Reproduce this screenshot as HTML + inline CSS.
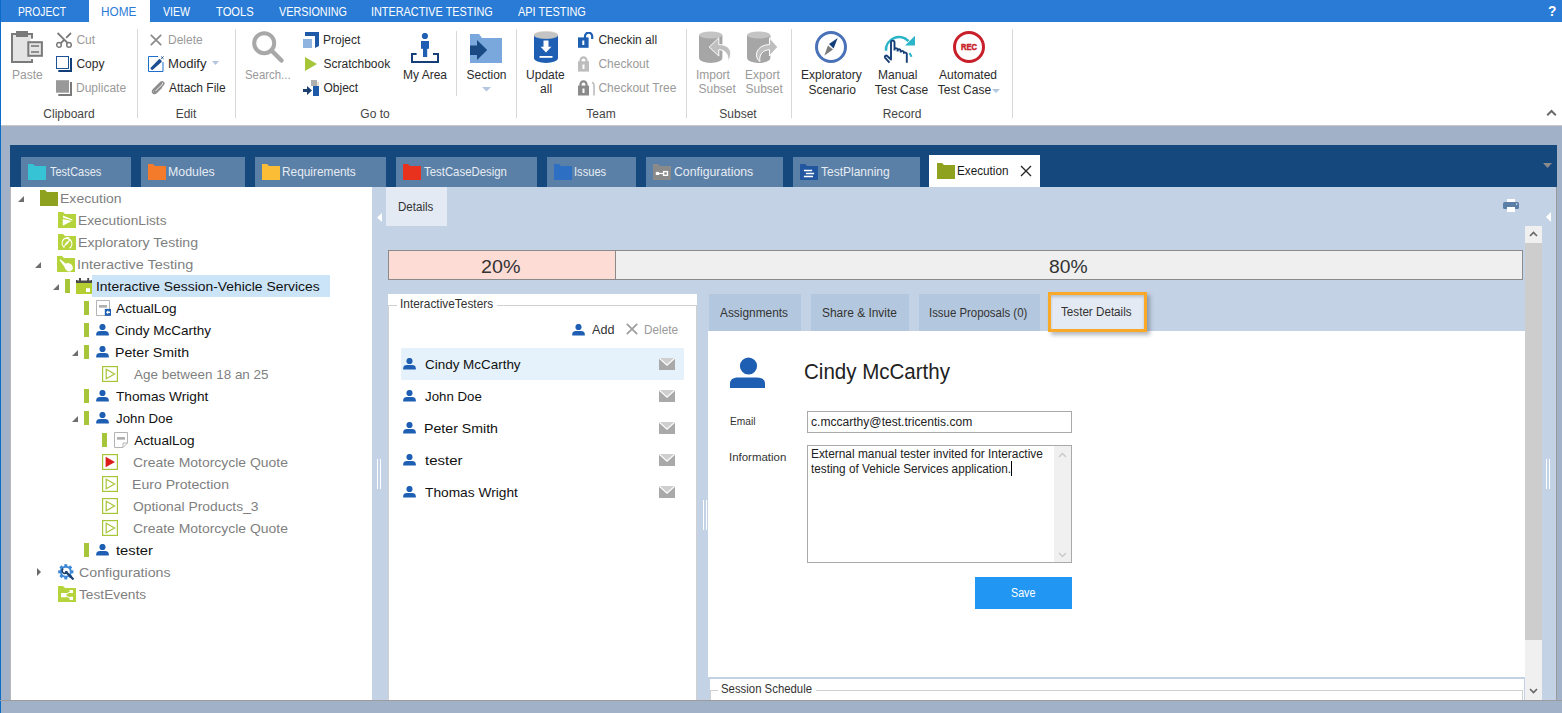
<!DOCTYPE html>
<html><head><meta charset="utf-8"><style>
html,body{margin:0;padding:0;width:1562px;height:713px;overflow:hidden;background:#a1b1c8}
body{position:relative;font-family:"Liberation Sans", sans-serif}
body>div{position:absolute}
</style></head><body>
<div style="left:0px;top:0px;width:1562px;height:713px;background:#a1b1c8;"></div>
<div style="left:0px;top:0px;width:1562px;height:22px;background:#2a7bd6;"></div>
<div style="left:1px;top:22px;width:1561px;height:103px;background:#ffffff;"></div>
<div style="left:1px;top:125px;width:1561px;height:1px;background:#c8c8c8;"></div>
<div style="left:0px;top:0px;width:1px;height:713px;background:#0a6cc8;"></div>
<div style="left:89px;top:0px;width:61px;height:22px;background:#ffffff;"></div>
<div style="left:18.48px;top:6px;font-size:12px;line-height:12px;color:#fff;white-space:nowrap;transform:scaleX(0.8580);transform-origin:0 0;">PROJECT</div>
<div style="left:101.26px;top:6px;font-size:12px;line-height:12px;color:#2a7bd6;white-space:nowrap;transform:scaleX(0.9838);transform-origin:0 0;">HOME</div>
<div style="left:162.95px;top:6px;font-size:12px;line-height:12px;color:#fff;white-space:nowrap;transform:scaleX(0.8841);transform-origin:0 0;">VIEW</div>
<div style="left:216.18px;top:6px;font-size:12px;line-height:12px;color:#fff;white-space:nowrap;transform:scaleX(0.9329);transform-origin:0 0;">TOOLS</div>
<div style="left:278.95px;top:6px;font-size:12px;line-height:12px;color:#fff;white-space:nowrap;transform:scaleX(0.9005);transform-origin:0 0;">VERSIONING</div>
<div style="left:371.02px;top:6px;font-size:12px;line-height:12px;color:#fff;white-space:nowrap;transform:scaleX(0.9054);transform-origin:0 0;">INTERACTIVE TESTING</div>
<div style="left:518.00px;top:6px;font-size:12px;line-height:12px;color:#fff;white-space:nowrap;transform:scaleX(0.9108);transform-origin:0 0;">API TESTING</div>
<div style="left:1547.88px;top:4px;font-size:14.5px;line-height:14.5px;color:#fff;white-space:nowrap;font-weight:bold;transform:scaleX(0.9466);transform-origin:0 0;">?</div>
<div style="left:137px;top:29px;width:1px;height:89px;background:#d8d8d8;"></div>
<div style="left:235px;top:29px;width:1px;height:89px;background:#d8d8d8;"></div>
<div style="left:456px;top:31px;width:1px;height:65px;background:#d8d8d8;"></div>
<div style="left:516px;top:29px;width:1px;height:89px;background:#d8d8d8;"></div>
<div style="left:686px;top:29px;width:1px;height:89px;background:#d8d8d8;"></div>
<div style="left:791px;top:29px;width:1px;height:89px;background:#d8d8d8;"></div>
<div style="left:1012px;top:29px;width:1px;height:89px;background:#d8d8d8;"></div>
<div style="left:9px;top:108px;width:120px;text-align:center;font-size:12px;line-height:12px;color:#444;white-space:nowrap">Clipboard</div>
<div style="left:126px;top:108px;width:120px;text-align:center;font-size:12px;line-height:12px;color:#444;white-space:nowrap">Edit</div>
<div style="left:315px;top:108px;width:120px;text-align:center;font-size:12px;line-height:12px;color:#444;white-space:nowrap">Go to</div>
<div style="left:541px;top:108px;width:120px;text-align:center;font-size:12px;line-height:12px;color:#444;white-space:nowrap">Team</div>
<div style="left:678px;top:108px;width:120px;text-align:center;font-size:12px;line-height:12px;color:#444;white-space:nowrap">Subset</div>
<div style="left:842px;top:108px;width:120px;text-align:center;font-size:12px;line-height:12px;color:#444;white-space:nowrap">Record</div>
<svg style="position:absolute;left:11px;top:31px" width="32" height="32" viewBox="0 0 32 32"><rect x="1" y="3" width="20" height="28" fill="#e4e4e4" stroke="#7a7a7a" stroke-width="2"/><rect x="5" y="0" width="12" height="6" fill="#7a7a7a"/><rect x="19.5" y="7.6" width="4" height="20.5" fill="#fff"/><rect x="17.3" y="11.2" width="13.6" height="13.6" fill="#e4e4e4" stroke="#7a7a7a" stroke-width="2"/><rect x="20" y="14.2" width="8" height="1.6" fill="#7a7a7a"/><rect x="20" y="20.2" width="8" height="1.6" fill="#7a7a7a"/></svg>
<div style="left:12.04px;top:69px;font-size:12px;line-height:12px;color:#9a9a9a;white-space:nowrap;">Paste</div>
<svg style="position:absolute;left:56px;top:32px" width="16" height="16" viewBox="0 0 16 16"><path d="M1.6 1 L12 11.3 M15 1 L10.2 5.8 M8 8 L4.6 11.3" stroke="#7a7a7a" stroke-width="1.8" fill="none"/><circle cx="3" cy="12.9" r="2.3" fill="none" stroke="#7a7a7a" stroke-width="1.5"/><circle cx="13" cy="12.9" r="2.3" fill="none" stroke="#7a7a7a" stroke-width="1.5"/></svg>
<div style="left:76.40px;top:34px;font-size:12px;line-height:12px;color:#9a9a9a;white-space:nowrap;">Cut</div>
<svg style="position:absolute;left:56px;top:56px" width="16" height="16" viewBox="0 0 16 16"><rect x="0.5" y="0.5" width="12" height="12" fill="#fff" stroke="#1d5294"/><path d="M15 2 V15 H2.3" stroke="#113d78" stroke-width="2" fill="none"/></svg>
<div style="left:76.40px;top:58px;font-size:12px;line-height:12px;color:#2b2b2b;white-space:nowrap;">Copy</div>
<svg style="position:absolute;left:56px;top:80px" width="16" height="16" viewBox="0 0 16 16"><rect x="0" y="0.2" width="13" height="12.5" fill="#999"/><path d="M15 2 V15 H2.3" stroke="#7a7a7a" stroke-width="2" fill="none"/></svg>
<div style="left:76.04px;top:82px;font-size:12px;line-height:12px;color:#9a9a9a;white-space:nowrap;">Duplicate</div>
<svg style="position:absolute;left:150px;top:34px" width="12" height="12" viewBox="0 0 12 12"><path d="M0.8 0.8 L11.2 11.2 M11.2 0.8 L0.8 11.2" stroke="#8a8a8a" stroke-width="1.7"/></svg>
<div style="left:168.04px;top:34px;font-size:12px;line-height:12px;color:#9a9a9a;white-space:nowrap;">Delete</div>
<svg style="position:absolute;left:148px;top:56px" width="16" height="16" viewBox="0 0 16 16"><path d="M10 0.5 H0.5 V15.5 H15 V6" fill="none" stroke="#1e6fcc"/><path d="M4.2 13.2 L3.2 12.2 L11.5 3.8 L13 5.3 Z" fill="#1d4f91" stroke="#1d4f91" stroke-width="1.6" stroke-linejoin="round"/><path d="M13.2 0.5 L15.5 2.8 M15.5 0.5 L13.2 2.8" stroke="#1d4f91" stroke-width="1"/></svg>
<div style="left:168.45px;top:58px;font-size:12px;line-height:12px;color:#2b2b2b;white-space:nowrap;transform:scaleX(1.0908);transform-origin:0 0;">Modify</div>
<svg style="position:absolute;left:212px;top:61px" width="7" height="4" viewBox="0 0 7 4"><path d="M0 0 H7 L3.5 4 Z" fill="#b4c6e0"/></svg>
<svg style="position:absolute;left:150px;top:80px" width="16" height="16" viewBox="0 0 16 16"><path d="M12 3 L5 10 C3.5 11.5 5 13 6.5 11.5 L13 5 C15 3 12.5 0.5 10.5 2.5 L3.5 9.5 C1 12 4 15 6.5 12.5 L12 7" stroke="#8c8c8c" stroke-width="1.5" fill="none"/></svg>
<div style="left:169.00px;top:82px;font-size:12px;line-height:12px;color:#2b2b2b;white-space:nowrap;">Attach File</div>
<svg style="position:absolute;left:252px;top:31px" width="34" height="34" viewBox="0 0 34 34"><circle cx="12.2" cy="12.2" r="10" fill="none" stroke="#a8a8a8" stroke-width="4"/><path d="M19.5 19.5 L29.5 29.5" stroke="#a8a8a8" stroke-width="4.5" stroke-linecap="round"/></svg>
<div style="left:245.49px;top:69px;font-size:12px;line-height:12px;color:#9a9a9a;white-space:nowrap;transform:scaleX(0.9487);transform-origin:0 0;">Search...</div>
<svg style="position:absolute;left:303px;top:32px" width="16" height="16" viewBox="0 0 16 16"><path d="M2 0 H16 V14 L12 16 V4 H2 Z" fill="#1e5aa8"/><rect x="0" y="7" width="9" height="9" fill="#8fb4e0"/></svg>
<div style="left:323.04px;top:34px;font-size:12px;line-height:12px;color:#2b2b2b;white-space:nowrap;">Project</div>
<svg style="position:absolute;left:305px;top:57px" width="12" height="14" viewBox="0 0 12 14"><path d="M0 0 L12 7 L0 14 Z" fill="#a7c539"/></svg>
<div style="left:323.46px;top:58px;font-size:12px;line-height:12px;color:#2b2b2b;white-space:nowrap;">Scratchbook</div>
<svg style="position:absolute;left:303px;top:80px" width="16" height="16" viewBox="0 0 16 16"><rect x="8" y="0" width="6" height="6" fill="#b0b0b0"/><rect x="14" y="2" width="2" height="4" fill="#e8e0d0"/><rect x="10" y="6" width="6" height="10" fill="#1e5aa8"/><path d="M0 9 H4 V6 L9 10.5 L4 15 V12 H0 Z" fill="#1d3f70"/></svg>
<div style="left:323.46px;top:82px;font-size:12px;line-height:12px;color:#2b2b2b;white-space:nowrap;">Object</div>
<svg style="position:absolute;left:411px;top:33px" width="28" height="30" viewBox="0 0 28 30"><circle cx="13.9" cy="3" r="3.1" fill="#1e5fb3"/><rect x="10" y="8" width="8" height="7.8" fill="#1e5fb3"/><rect x="12" y="15" width="4.2" height="9" fill="#1e5fb3"/><path d="M5.6 21.1 H1 V28.9 H27 V21.1 H22" stroke="#163f78" stroke-width="2" fill="none"/></svg>
<div style="left:403.04px;top:69px;font-size:12px;line-height:12px;color:#2b2b2b;white-space:nowrap;">My Area</div>
<svg style="position:absolute;left:470px;top:34px" width="32" height="29" viewBox="0 0 32 29"><path d="M0 0 H9 L12 4 H32 V29 H0 Z" fill="#7aa8dc"/><path d="M0 11.5 H7 V6 L17.2 16 L7 26 V20.9 H0 Z" fill="#1a4a84"/></svg>
<div style="left:466.46px;top:69px;font-size:12px;line-height:12px;color:#2b2b2b;white-space:nowrap;">Section</div>
<svg style="position:absolute;left:482px;top:87px" width="9" height="5" viewBox="0 0 9 5"><path d="M0 0 H9 L4.5 4.5 Z" fill="#b4c6e0"/></svg>
<svg style="position:absolute;left:534px;top:31px" width="24" height="32" viewBox="0 0 24 32"><path d="M0 4 V27 A12 5 0 0 0 24 27 V4 Z" fill="#1e5fb3"/><ellipse cx="12" cy="4" rx="12" ry="3.6" fill="#c4c4c4" stroke="#d8cfc0" stroke-width="0.6"/><rect x="9.5" y="9.5" width="5" height="8" fill="#fff"/><path d="M6.6 15.7 H17.4 L12 21.5 Z" fill="#fff"/><rect x="5.5" y="25" width="13" height="1.8" fill="#fff"/></svg>
<div style="left:526.10px;top:69px;font-size:12px;line-height:12px;color:#2b2b2b;white-space:nowrap;">Update</div>
<div style="left:540.12px;top:83px;font-size:12px;line-height:12px;color:#2b2b2b;white-space:nowrap;">all</div>
<svg style="position:absolute;left:578px;top:32px" width="17" height="16" viewBox="0 0 17 16"><path d="M7 6 V4.2 A3.5 3.5 0 0 1 14.2 4.2 V7" stroke="#1e5fb3" stroke-width="2.2" fill="none"/><rect x="0" y="5.4" width="10.6" height="10.4" fill="#1e5fb3"/><rect x="4.3" y="8.5" width="2" height="4.5" fill="#fff"/></svg>
<div style="left:598.40px;top:34px;font-size:12px;line-height:12px;color:#2b2b2b;white-space:nowrap;">Checkin all</div>
<svg style="position:absolute;left:578px;top:56px" width="12" height="16" viewBox="0 0 12 16"><path d="M2.5 6 V4.5 A3 3.2 0 0 1 8.5 4.5 V6" stroke="#bdbdbd" stroke-width="2.2" fill="none"/><rect x="0" y="5.3" width="11" height="10.3" fill="#bdbdbd"/><rect x="4.5" y="8.5" width="2" height="4.5" fill="#fff"/></svg>
<div style="left:598.40px;top:58px;font-size:12px;line-height:12px;color:#9a9a9a;white-space:nowrap;">Checkout</div>
<svg style="position:absolute;left:578px;top:80px" width="17" height="16" viewBox="0 0 17 16"><path d="M14 2.5 A3 3 0 0 1 16 5.5 V15.5" stroke="#bdbdbd" stroke-width="1.6" fill="none"/><path d="M2.5 6 V4.5 A3 3.2 0 0 1 8.5 4.5 V6" stroke="#8a8a8a" stroke-width="2.2" fill="none"/><rect x="0" y="5.6" width="11" height="9.9" fill="#8a8a8a"/><rect x="4.5" y="8.5" width="2" height="4.5" fill="#fff"/></svg>
<div style="left:598.40px;top:82px;font-size:12px;line-height:12px;color:#9a9a9a;white-space:nowrap;">Checkout Tree</div>
<svg style="position:absolute;left:699px;top:31px" width="33" height="33" viewBox="0 0 33 33"><path d="M0 4 V27 A11.7 5 0 0 0 23.4 27 V4 Z" fill="#a6a6a6"/><ellipse cx="11.7" cy="4" rx="11.7" ry="3.5" fill="#c4c4c4"/><path d="M10.2 16.1 L19.8 6.8 V13.6 C27 13.6 31.7 17 31.7 22.5 C31.7 26 30.5 28.5 29 30.6 C29.8 23.5 26 18.7 19.8 18.7 V25 Z" fill="#bfbfbf" stroke="#fff" stroke-width="1"/></svg>
<div style="left:695.92px;top:69px;font-size:12px;line-height:12px;color:#9a9a9a;white-space:nowrap;">Import</div>
<div style="left:698.46px;top:83px;font-size:12px;line-height:12px;color:#9a9a9a;white-space:nowrap;">Subset</div>
<svg style="position:absolute;left:747px;top:31px" width="33" height="33" viewBox="0 0 33 33"><path d="M0 4 V27 A11.7 5 0 0 0 23.4 27 V4 Z" fill="#a6a6a6"/><ellipse cx="11.7" cy="4" rx="11.7" ry="3.5" fill="#c4c4c4"/><path d="M30.7 16 L22.5 6.8 V13.6 C15 13.6 9.5 18 9.5 24 C9.5 27 11 29.5 13 30.6 C11.5 24 16 18.7 22.5 18.7 V25 Z" fill="#bfbfbf" stroke="#fff" stroke-width="1"/></svg>
<div style="left:745.04px;top:69px;font-size:12px;line-height:12px;color:#9a9a9a;white-space:nowrap;">Export</div>
<div style="left:745.46px;top:83px;font-size:12px;line-height:12px;color:#9a9a9a;white-space:nowrap;">Subset</div>
<svg style="position:absolute;left:815px;top:31px" width="32" height="32" viewBox="0 0 32 32"><circle cx="16" cy="16" r="14.5" fill="none" stroke="#4a72b8" stroke-width="3"/><path d="M22.7 7.1 L14 12.9 L18.6 17.5 Z" fill="#143f7a"/><path d="M12.9 14.6 L18 18.6 L9.4 24.4 Z" fill="#7a7a7a"/></svg>
<div style="left:801.04px;top:69px;font-size:12px;line-height:12px;color:#2b2b2b;white-space:nowrap;">Exploratory</div>
<div style="left:808.46px;top:84px;font-size:12px;line-height:12px;color:#2b2b2b;white-space:nowrap;">Scenario</div>
<svg style="position:absolute;left:884px;top:32px" width="32" height="32" viewBox="0 0 32 32"><path d="M2 18.8 A13 13 0 0 1 24.5 9.2" stroke="#2bb5c8" stroke-width="2.6" fill="none"/><path d="M31 3.8 V13.6 H21 Z" fill="#2bb5c8"/><path d="M25.5 21 L27.6 24.8" stroke="#2bb5c8" stroke-width="2"/><path d="M5.5 30.7 L1.2 25.8 C0.2 24.5 1.8 22.8 3.2 24 L7 27.5 V10.5 C7 8 10.5 8 10.5 10.5 V18.5 M10.5 17.6 C10.8 15.6 13.4 15.6 13.6 17.8 V19.5 M13.6 18.6 C13.8 16.8 16.5 16.8 16.7 19 V20.5 M16.7 20 C17 18.4 19.6 18.4 19.9 20.6 V21 C20.5 20 22.8 20.5 22.8 22 V30.7" stroke="#163f78" stroke-width="1.9" fill="none" stroke-linejoin="round"/></svg>
<div style="left:878.04px;top:69px;font-size:12px;line-height:12px;color:#2b2b2b;white-space:nowrap;">Manual</div>
<div style="left:874.76px;top:84px;font-size:12px;line-height:12px;color:#2b2b2b;white-space:nowrap;">Test Case</div>
<svg style="position:absolute;left:953px;top:31px" width="32" height="32" viewBox="0 0 32 32"><circle cx="16" cy="16" r="14.5" fill="none" stroke="#c8202a" stroke-width="3"/><text x="8" y="18.7" font-family="Liberation Sans" font-weight="bold" font-size="9" textLength="16" lengthAdjust="spacingAndGlyphs" fill="#c8202a" stroke="#c8202a" stroke-width="0.5">REC</text></svg>
<div style="left:939.00px;top:69px;font-size:12px;line-height:12px;color:#2b2b2b;white-space:nowrap;">Automated</div>
<div style="left:937.76px;top:84px;font-size:12px;line-height:12px;color:#2b2b2b;white-space:nowrap;">Test Case</div>
<svg style="position:absolute;left:992px;top:89px" width="8" height="5" viewBox="0 0 8 5"><path d="M0 0 H8 L4 4 Z" fill="#b4c6e0"/></svg>
<svg style="position:absolute;left:1546px;top:109px" width="11" height="8" viewBox="0 0 11 8"><path d="M1.2 6.2 L5.5 2 L9.8 6.2" stroke="#6a6a6a" stroke-width="2" fill="none"/></svg>
<div style="left:10px;top:145px;width:1547px;height:42px;background:#15497e;"></div>
<div style="left:21px;top:157px;width:110px;height:30px;background:#5b80a7;"></div>
<svg style="position:absolute;left:28px;top:164px" width="18" height="16" viewBox="0 0 18 16"><path d="M0 0 H5 L7 2 H18 V16 H0 Z" fill="#36c3d6"/></svg>
<div style="left:49.78px;top:166px;font-size:12.2px;line-height:12.2px;color:#e6ecf3;white-space:nowrap;transform:scaleX(0.9005);transform-origin:0 0;">TestCases</div>
<div style="left:141px;top:157px;width:104px;height:30px;background:#5b80a7;"></div>
<svg style="position:absolute;left:148px;top:164px" width="18" height="16" viewBox="0 0 18 16"><path d="M0 0 H5 L7 2 H18 V16 H0 Z" fill="#f47b2a"/></svg>
<div style="left:168.41px;top:166px;font-size:12.2px;line-height:12.2px;color:#e6ecf3;white-space:nowrap;transform:scaleX(1.0131);transform-origin:0 0;">Modules</div>
<div style="left:255px;top:157px;width:131px;height:30px;background:#5b80a7;"></div>
<svg style="position:absolute;left:262px;top:164px" width="18" height="16" viewBox="0 0 18 16"><path d="M0 0 H5 L7 2 H18 V16 H0 Z" fill="#fbbd36"/></svg>
<div style="left:282.35px;top:166px;font-size:12.2px;line-height:12.2px;color:#e6ecf3;white-space:nowrap;transform:scaleX(0.9726);transform-origin:0 0;">Requirements</div>
<div style="left:396px;top:157px;width:141px;height:30px;background:#5b80a7;"></div>
<svg style="position:absolute;left:403px;top:164px" width="18" height="16" viewBox="0 0 18 16"><path d="M0 0 H5 L7 2 H18 V16 H0 Z" fill="#e8321e"/></svg>
<div style="left:424.37px;top:166px;font-size:12.2px;line-height:12.2px;color:#e6ecf3;white-space:nowrap;transform:scaleX(0.9342);transform-origin:0 0;">TestCaseDesign</div>
<div style="left:547px;top:157px;width:89px;height:30px;background:#5b80a7;"></div>
<svg style="position:absolute;left:554px;top:164px" width="18" height="16" viewBox="0 0 18 16"><path d="M0 0 H5 L7 2 H18 V16 H0 Z" fill="#2d6fc2"/></svg>
<div style="left:574.20px;top:166px;font-size:12.2px;line-height:12.2px;color:#e6ecf3;white-space:nowrap;transform:scaleX(0.9131);transform-origin:0 0;">Issues</div>
<div style="left:646px;top:157px;width:137px;height:30px;background:#5b80a7;"></div>
<svg style="position:absolute;left:653px;top:164px" width="18" height="16" viewBox="0 0 18 16"><path d="M0 0 H5 L7 2 H18 V16 H0 Z" fill="#8a8a8a"/><rect x="2.8" y="7.9" width="3.2" height="3.1" fill="#fff"/><path d="M6 9.5 H10" stroke="#fff" stroke-width="1.2"/><rect x="10.6" y="7.6" width="3.9" height="3.7" fill="#8a8a8a" stroke="#fff" stroke-width="1.4"/></svg>
<div style="left:673.98px;top:166px;font-size:12.2px;line-height:12.2px;color:#e6ecf3;white-space:nowrap;transform:scaleX(1.0083);transform-origin:0 0;">Configurations</div>
<div style="left:793px;top:157px;width:127px;height:30px;background:#5b80a7;"></div>
<svg style="position:absolute;left:800px;top:164px" width="18" height="16" viewBox="0 0 18 16"><path d="M0 0 H5 L7 2 H18 V16 H0 Z" fill="#2257a0"/><path d="M3.9 6.5 H12.1 M5.9 9.5 H14.1 M3.9 12.5 H13" stroke="#fff" stroke-width="1.3"/></svg>
<div style="left:821.36px;top:166px;font-size:12.2px;line-height:12.2px;color:#e6ecf3;white-space:nowrap;transform:scaleX(0.9839);transform-origin:0 0;">TestPlanning</div>
<div style="left:929px;top:155px;width:111px;height:32px;background:#ffffff;"></div>
<svg style="position:absolute;left:937px;top:163px" width="18" height="16" viewBox="0 0 18 16"><path d="M0 0 H5 L7 2 H18 V16 H0 Z" fill="#8fa21f"/></svg>
<div style="left:957.46px;top:165px;font-size:12.2px;line-height:12.2px;color:#1a1a1a;white-space:nowrap;transform:scaleX(0.9616);transform-origin:0 0;">Execution</div>
<svg style="position:absolute;left:1020px;top:165px" width="12" height="12" viewBox="0 0 12 12"><path d="M1 1 L11 11 M11 1 L1 11" stroke="#222" stroke-width="1.3"/></svg>
<svg style="position:absolute;left:1543px;top:163px" width="9" height="5" viewBox="0 0 9 5"><path d="M0 0 H9 L4.5 5 Z" fill="#8a8a8a"/></svg>
<div style="left:10px;top:187px;width:362px;height:514px;background:#ffffff;box-sizing:border-box;border-left:1px solid #b8b8b8;border-bottom:1px solid #b0b0b0"></div>
<div style="left:372px;top:187px;width:1185px;height:513px;background:#c3d2e5;"></div>
<div style="left:1556px;top:187px;width:1px;height:514px;background:#9a9a9a;"></div>
<svg style="position:absolute;left:18px;top:196px" width="7" height="7" viewBox="0 0 7 7"><path d="M6 0 V6 H0 Z" fill="#6e6e6e"/></svg>
<svg style="position:absolute;left:40px;top:190px" width="18" height="16" viewBox="0 0 18 16"><path d="M0 0 H5 L7 2 H18 V16 H0 Z" fill="#8fa21f"/></svg>
<div style="left:60.28px;top:192px;font-size:13.6px;line-height:13.6px;color:#7f7f7f;white-space:nowrap;transform:scaleX(1.0324);transform-origin:0 0;">Execution</div>
<svg style="position:absolute;left:58px;top:212px" width="18" height="16" viewBox="0 0 18 16"><path d="M0 0 H5 L7 2 H18 V16 H0 Z" fill="#b5d33a"/><path d="M5 3.6 L14.5 7.4 L14.5 8.4 L5 5.8 Z M4.8 7 L13.8 9 L4.8 13.8 Z" fill="#fff"/></svg>
<div style="left:78.30px;top:214px;font-size:13.6px;line-height:13.6px;color:#7f7f7f;white-space:nowrap;transform:scaleX(1.0098);transform-origin:0 0;">ExecutionLists</div>
<svg style="position:absolute;left:58px;top:234px" width="18" height="16" viewBox="0 0 18 16"><path d="M0 0 H5 L7 2 H18 V16 H0 Z" fill="#b5d33a"/><path d="M6.5 13.5 A5.4 5.4 0 0 1 11.5 4 M11.5 14.3 A5.4 5.4 0 0 0 6.5 4.8" stroke="#fff" stroke-width="1.2" fill="none"/><path d="M13 4.5 L8.2 8.2 L5 13.5 L9.8 9.8 Z" fill="#fff"/></svg>
<div style="left:78.27px;top:236px;font-size:13.6px;line-height:13.6px;color:#7f7f7f;white-space:nowrap;transform:scaleX(1.0403);transform-origin:0 0;">Exploratory Testing</div>
<svg style="position:absolute;left:35px;top:262px" width="7" height="7" viewBox="0 0 7 7"><path d="M6 0 V6 H0 Z" fill="#6e6e6e"/></svg>
<svg style="position:absolute;left:57px;top:256px" width="18" height="16" viewBox="0 0 18 16"><path d="M0 0 H5 L7 2 H18 V16 H0 Z" fill="#b5d33a"/><path d="M2.8 4.6 C2.4 3.8 3.3 3.2 3.9 3.7 L9.2 8 L9.6 6.9 C10.2 6.6 10.8 6.8 11 7.4 L11.6 7.1 C12.2 7 12.7 7.3 12.8 7.9 L13.4 7.8 C14.3 8 15 9.2 15.6 10.6 L16 12.8 L13.2 15.6 L10.6 15.2 C9.6 14.6 8.6 13.6 8 12.6 L7.6 11 Z" fill="#fff"/></svg>
<div style="left:77.30px;top:258px;font-size:13.6px;line-height:13.6px;color:#7f7f7f;white-space:nowrap;transform:scaleX(1.0631);transform-origin:0 0;">Interactive Testing</div>
<div style="left:92px;top:275px;width:238px;height:22px;background:#cce4f7;"></div>
<svg style="position:absolute;left:53px;top:284px" width="7" height="7" viewBox="0 0 7 7"><path d="M6 0 V6 H0 Z" fill="#6e6e6e"/></svg>
<div style="left:65px;top:279px;width:5px;height:14px;background:#a7c539;"></div>
<svg style="position:absolute;left:76px;top:278px" width="16" height="16" viewBox="0 0 16 16"><rect x="0" y="5" width="16" height="11" fill="#b5cf32"/><rect x="0" y="2" width="16" height="3" fill="#4a4a4a"/><rect x="1.5" y="1.5" width="1.5" height="1" fill="#fff"/><rect x="5" y="1.5" width="6" height="1" fill="#fff"/><rect x="13" y="1.5" width="1.5" height="1" fill="#fff"/><rect x="3" y="0" width="2" height="3" fill="#4a4a4a"/><rect x="11.3" y="0" width="1.8" height="3" fill="#4a4a4a"/><rect x="10" y="10.2" width="4" height="3.8" fill="#fff"/></svg>
<div style="left:96.05px;top:280px;font-size:13.6px;line-height:13.6px;color:#111;white-space:nowrap;transform:scaleX(1.0205);transform-origin:0 0;">Interactive Session-Vehicle Services</div>
<div style="left:84px;top:301px;width:5px;height:14px;background:#a7c539;"></div>
<svg style="position:absolute;left:96px;top:300px" width="16" height="16" viewBox="0 0 16 16"><path d="M0.5 0.5 H13.5 V15.5 H0.5 Z" fill="#fff" stroke="#b4b4b4"/><rect x="3" y="5" width="8" height="2.7" fill="#b0b0b0"/><rect x="8.8" y="8.9" width="6.2" height="6.9" fill="#1e5fb3"/><path d="M10 12.3 L12.2 10.2 V11.6 H14 V13 H12.2 V14.4 Z" fill="#fff"/></svg>
<div style="left:116.10px;top:302px;font-size:13.6px;line-height:13.6px;color:#111;white-space:nowrap;">ActualLog</div>
<div style="left:84px;top:323px;width:5px;height:14px;background:#a7c539;"></div>
<svg style="position:absolute;left:96px;top:324px" width="13" height="12" viewBox="0 0 13 12"><circle cx="6.5" cy="3" r="3.1" fill="#1e5fb3"/><path d="M0.2 11.6 L0.2 10.2 C0.2 8.2 1.8 7 4 7 L9 7 C11.2 7 12.8 8.2 12.8 10.2 L12.8 11.6 Z" fill="#1e5fb3"/></svg>
<div style="left:115.42px;top:324px;font-size:13.6px;line-height:13.6px;color:#111;white-space:nowrap;transform:scaleX(0.9929);transform-origin:0 0;">Cindy McCarthy</div>
<svg style="position:absolute;left:72px;top:350px" width="7" height="7" viewBox="0 0 7 7"><path d="M6 0 V6 H0 Z" fill="#6e6e6e"/></svg>
<div style="left:84px;top:345px;width:5px;height:14px;background:#a7c539;"></div>
<svg style="position:absolute;left:96px;top:346px" width="13" height="12" viewBox="0 0 13 12"><circle cx="6.5" cy="3" r="3.1" fill="#1e5fb3"/><path d="M0.2 11.6 L0.2 10.2 C0.2 8.2 1.8 7 4 7 L9 7 C11.2 7 12.8 8.2 12.8 10.2 L12.8 11.6 Z" fill="#1e5fb3"/></svg>
<div style="left:114.97px;top:346px;font-size:13.6px;line-height:13.6px;color:#111;white-space:nowrap;transform:scaleX(1.0421);transform-origin:0 0;">Peter Smith</div>
<svg style="position:absolute;left:102px;top:366px" width="16" height="16" viewBox="0 0 16 16"><rect x="0.6" y="0.6" width="14.8" height="14.8" fill="none" stroke="#a7c539" stroke-width="1.2"/><path d="M4.2 3.3 L12.6 8 L4.2 12.7 Z" fill="none" stroke="#a7c539" stroke-width="1.2"/></svg>
<div style="left:133.50px;top:368px;font-size:13.6px;line-height:13.6px;color:#7f7f7f;white-space:nowrap;transform:scaleX(0.9888);transform-origin:0 0;">Age between 18 an 25</div>
<div style="left:84px;top:389px;width:5px;height:14px;background:#a7c539;"></div>
<svg style="position:absolute;left:96px;top:390px" width="13" height="12" viewBox="0 0 13 12"><circle cx="6.5" cy="3" r="3.1" fill="#1e5fb3"/><path d="M0.2 11.6 L0.2 10.2 C0.2 8.2 1.8 7 4 7 L9 7 C11.2 7 12.8 8.2 12.8 10.2 L12.8 11.6 Z" fill="#1e5fb3"/></svg>
<div style="left:116.03px;top:390px;font-size:13.6px;line-height:13.6px;color:#111;white-space:nowrap;transform:scaleX(1.0044);transform-origin:0 0;">Thomas Wright</div>
<svg style="position:absolute;left:72px;top:416px" width="7" height="7" viewBox="0 0 7 7"><path d="M6 0 V6 H0 Z" fill="#6e6e6e"/></svg>
<div style="left:84px;top:411px;width:5px;height:14px;background:#a7c539;"></div>
<svg style="position:absolute;left:96px;top:412px" width="13" height="12" viewBox="0 0 13 12"><circle cx="6.5" cy="3" r="3.1" fill="#1e5fb3"/><path d="M0.2 11.6 L0.2 10.2 C0.2 8.2 1.8 7 4 7 L9 7 C11.2 7 12.8 8.2 12.8 10.2 L12.8 11.6 Z" fill="#1e5fb3"/></svg>
<div style="left:116.10px;top:412px;font-size:13.6px;line-height:13.6px;color:#111;white-space:nowrap;transform:scaleX(0.9757);transform-origin:0 0;">John Doe</div>
<div style="left:102px;top:433px;width:5px;height:14px;background:#a7c539;"></div>
<svg style="position:absolute;left:114px;top:432px" width="14" height="16" viewBox="0 0 14 16"><path d="M0.5 0.5 H13.5 V11 L9 15.5 H0.5 Z" fill="#fff" stroke="#b4b4b4"/><path d="M13.5 11 H9 V15.5" fill="none" stroke="#b4b4b4"/><rect x="3" y="5" width="8" height="2.7" fill="#b0b0b0"/></svg>
<div style="left:134.20px;top:434px;font-size:13.6px;line-height:13.6px;color:#111;white-space:nowrap;">ActualLog</div>
<svg style="position:absolute;left:102px;top:454px" width="16" height="16" viewBox="0 0 16 16"><rect x="0.6" y="0.6" width="14.8" height="14.8" fill="none" stroke="#a7c539" stroke-width="1.2"/><path d="M3.6 2.8 L13 8 L3.6 13.2 Z" fill="#dd1c1c"/></svg>
<div style="left:132.60px;top:456px;font-size:13.6px;line-height:13.6px;color:#7f7f7f;white-space:nowrap;transform:scaleX(1.0255);transform-origin:0 0;">Create Motorcycle Quote</div>
<svg style="position:absolute;left:102px;top:476px" width="16" height="16" viewBox="0 0 16 16"><rect x="0.6" y="0.6" width="14.8" height="14.8" fill="none" stroke="#a7c539" stroke-width="1.2"/><path d="M4.2 3.3 L12.6 8 L4.2 12.7 Z" fill="none" stroke="#a7c539" stroke-width="1.2"/></svg>
<div style="left:132.17px;top:478px;font-size:13.6px;line-height:13.6px;color:#7f7f7f;white-space:nowrap;transform:scaleX(1.0356);transform-origin:0 0;">Euro Protection</div>
<svg style="position:absolute;left:102px;top:498px" width="16" height="16" viewBox="0 0 16 16"><rect x="0.6" y="0.6" width="14.8" height="14.8" fill="none" stroke="#a7c539" stroke-width="1.2"/><path d="M4.2 3.3 L12.6 8 L4.2 12.7 Z" fill="none" stroke="#a7c539" stroke-width="1.2"/></svg>
<div style="left:132.68px;top:500px;font-size:13.6px;line-height:13.6px;color:#7f7f7f;white-space:nowrap;transform:scaleX(1.0192);transform-origin:0 0;">Optional Products_3</div>
<svg style="position:absolute;left:102px;top:520px" width="16" height="16" viewBox="0 0 16 16"><rect x="0.6" y="0.6" width="14.8" height="14.8" fill="none" stroke="#a7c539" stroke-width="1.2"/><path d="M4.2 3.3 L12.6 8 L4.2 12.7 Z" fill="none" stroke="#a7c539" stroke-width="1.2"/></svg>
<div style="left:132.60px;top:522px;font-size:13.6px;line-height:13.6px;color:#7f7f7f;white-space:nowrap;transform:scaleX(1.0255);transform-origin:0 0;">Create Motorcycle Quote</div>
<div style="left:84px;top:543px;width:5px;height:14px;background:#a7c539;"></div>
<svg style="position:absolute;left:96px;top:544px" width="13" height="12" viewBox="0 0 13 12"><circle cx="6.5" cy="3" r="3.1" fill="#1e5fb3"/><path d="M0.2 11.6 L0.2 10.2 C0.2 8.2 1.8 7 4 7 L9 7 C11.2 7 12.8 8.2 12.8 10.2 L12.8 11.6 Z" fill="#1e5fb3"/></svg>
<div style="left:116.08px;top:544px;font-size:13.6px;line-height:13.6px;color:#111;white-space:nowrap;transform:scaleX(1.0866);transform-origin:0 0;">tester</div>
<svg style="position:absolute;left:37px;top:568px" width="5" height="8" viewBox="0 0 5 8"><path d="M0 0 L4 4 L0 8 Z" fill="#6a6a6a"/></svg>
<svg style="position:absolute;left:58px;top:564px" width="17" height="17" viewBox="0 0 17 17"><g fill="#3d87d8"><rect x="6.3" y="0.2" width="3" height="15.2"/><rect x="6.3" y="0.2" width="3" height="15.2" transform="rotate(45 7.8 7.8)"/><rect x="6.3" y="0.2" width="3" height="15.2" transform="rotate(90 7.8 7.8)"/><rect x="6.3" y="0.2" width="3" height="15.2" transform="rotate(135 7.8 7.8)"/><circle cx="7.8" cy="7.8" r="6"/></g><circle cx="7.8" cy="7.8" r="4" fill="#fff"/><path d="M8 8 L14.8 14.8" stroke="#1d3f70" stroke-width="2.3" stroke-linecap="round"/><path d="M5.2 4.6 A2.6 2.6 0 1 0 9.2 7.4" stroke="#1d3f70" stroke-width="1.6" fill="none"/></svg>
<div style="left:78.59px;top:566px;font-size:13.6px;line-height:13.6px;color:#7f7f7f;white-space:nowrap;transform:scaleX(1.0443);transform-origin:0 0;">Configurations</div>
<svg style="position:absolute;left:58px;top:586px" width="18" height="16" viewBox="0 0 18 16"><path d="M0 0 H5 L7 2 H18 V16 H0 Z" fill="#b5d33a"/><path d="M6 9.2 L13 5.5 M6 9.2 L13 12.4" stroke="#fff" stroke-width="1"/><rect x="3" y="7" width="5.5" height="4.3" fill="#fff"/><rect x="11.6" y="4" width="3.4" height="3" fill="#fff"/><rect x="11.6" y="10.8" width="3.4" height="3.2" fill="#fff"/></svg>
<div style="left:79.03px;top:588px;font-size:13.6px;line-height:13.6px;color:#7f7f7f;white-space:nowrap;transform:scaleX(1.0098);transform-origin:0 0;">TestEvents</div>
<div style="left:377px;top:459px;width:1px;height:30px;background:#ffffff;"></div>
<div style="left:380px;top:459px;width:1px;height:30px;background:#ffffff;"></div>
<svg style="position:absolute;left:377px;top:213px" width="5" height="9" viewBox="0 0 5 9"><path d="M5 0 V9 L0 4.5 Z" fill="#fff"/></svg>
<div style="left:386px;top:187px;width:61px;height:39px;background:#e4eaf4;"></div>
<div style="left:397.67px;top:201px;font-size:12px;line-height:12px;color:#333;white-space:nowrap;transform:scaleX(0.9637);transform-origin:0 0;">Details</div>
<svg style="position:absolute;left:1503px;top:199px" width="16" height="13" viewBox="0 0 16 13"><rect x="4" y="0" width="8" height="4" fill="#fff"/><rect x="0" y="3" width="16" height="7" rx="1.5" fill="#5b7fa6"/><rect x="4" y="8" width="8" height="5" fill="#fff"/><rect x="13" y="4.5" width="1.2" height="1.2" fill="#fff"/></svg>
<svg style="position:absolute;left:1546px;top:212px" width="5" height="10" viewBox="0 0 5 10"><path d="M5 0 V10 L0 5 Z" fill="#fff"/></svg>
<div style="left:388px;top:250px;width:1135px;height:30px;box-sizing:border-box;border:1px solid #8a8a8a;background:#efefef"></div>
<div style="left:389px;top:251px;width:226px;height:28px;background:#fddcd6;"></div>
<div style="left:615px;top:251px;width:1px;height:28px;background:#8a8a8a;"></div>
<div style="left:481.32px;top:257px;font-size:19px;line-height:19px;color:#333;white-space:nowrap;transform:scaleX(1.0361);transform-origin:0 0;">20%</div>
<div style="left:1048.83px;top:257px;font-size:19px;line-height:19px;color:#333;white-space:nowrap;transform:scaleX(1.0143);transform-origin:0 0;">80%</div>
<div style="left:1525px;top:226px;width:17px;height:474px;background:#f0f0f0;"></div>
<div style="left:1525px;top:243px;width:17px;height:397px;background:#cdcdcd;"></div>
<svg style="position:absolute;left:1529px;top:231px" width="9" height="6" viewBox="0 0 9 6"><path d="M1 5 L4.5 1.5 L8 5" stroke="#666" stroke-width="1.6" fill="none"/></svg>
<svg style="position:absolute;left:1529px;top:688px" width="9" height="6" viewBox="0 0 9 6"><path d="M1 1 L4.5 4.5 L8 1" stroke="#666" stroke-width="1.6" fill="none"/></svg>
<div style="left:1546px;top:459px;width:1px;height:30px;background:#ffffff;"></div>
<div style="left:1549px;top:459px;width:1px;height:30px;background:#ffffff;"></div>
<div style="left:388px;top:294px;width:309px;height:407px;background:#ffffff;"></div>
<div style="left:388px;top:305px;width:9px;height:1px;background:#d0d0d0;"></div>
<div style="left:497px;top:305px;width:200px;height:1px;background:#d0d0d0;"></div>
<div style="left:388px;top:305px;width:1px;height:396px;background:#d0d0d0;"></div>
<div style="left:696px;top:305px;width:1px;height:396px;background:#d0d0d0;"></div>
<div style="left:399.73px;top:298px;font-size:12.4px;line-height:12.4px;color:#333;white-space:nowrap;transform:scaleX(0.9592);transform-origin:0 0;">InteractiveTesters</div>
<svg style="position:absolute;left:572px;top:324px" width="13" height="12" viewBox="0 0 13 12"><circle cx="6.5" cy="3" r="3.1" fill="#1e5fb3"/><path d="M0.2 11.6 L0.2 10.2 C0.2 8.2 1.8 7 4 7 L9 7 C11.2 7 12.8 8.2 12.8 10.2 L12.8 11.6 Z" fill="#1e5fb3"/></svg>
<div style="left:592.00px;top:324px;font-size:12px;line-height:12px;color:#333;white-space:nowrap;transform:scaleX(1.0496);transform-origin:0 0;">Add</div>
<svg style="position:absolute;left:626px;top:323px" width="12" height="12" viewBox="0 0 12 12"><path d="M0.8 0.8 L11.2 11.2 M11.2 0.8 L0.8 11.2" stroke="#a0a0a0" stroke-width="1.8"/></svg>
<div style="left:643.56px;top:324px;font-size:12px;line-height:12px;color:#9a9a9a;white-space:nowrap;transform:scaleX(0.9795);transform-origin:0 0;">Delete</div>
<div style="left:401px;top:348px;width:283px;height:32px;background:#e5f1fb;"></div>
<svg style="position:absolute;left:403px;top:358px" width="13" height="12" viewBox="0 0 13 12"><circle cx="6.5" cy="3" r="3.1" fill="#1e5fb3"/><path d="M0.2 11.6 L0.2 10.2 C0.2 8.2 1.8 7 4 7 L9 7 C11.2 7 12.8 8.2 12.8 10.2 L12.8 11.6 Z" fill="#1e5fb3"/></svg>
<div style="left:424.53px;top:358px;font-size:13.4px;line-height:13.4px;color:#111;white-space:nowrap;transform:scaleX(1.0035);transform-origin:0 0;">Cindy McCarthy</div>
<svg style="position:absolute;left:659px;top:358px" width="16" height="12" viewBox="0 0 16 12"><rect x="0" y="0" width="16" height="12" fill="#a9a9a9"/><path d="M0 0 H16 L8 7 Z" fill="#cfcfcf"/><path d="M0.3 0.3 L8 7.2 L15.7 0.3" stroke="#fff" stroke-width="1.2" fill="none"/></svg>
<svg style="position:absolute;left:403px;top:390px" width="13" height="12" viewBox="0 0 13 12"><circle cx="6.5" cy="3" r="3.1" fill="#1e5fb3"/><path d="M0.2 11.6 L0.2 10.2 C0.2 8.2 1.8 7 4 7 L9 7 C11.2 7 12.8 8.2 12.8 10.2 L12.8 11.6 Z" fill="#1e5fb3"/></svg>
<div style="left:425.00px;top:390px;font-size:13.4px;line-height:13.4px;color:#111;white-space:nowrap;transform:scaleX(0.9903);transform-origin:0 0;">John Doe</div>
<svg style="position:absolute;left:659px;top:390px" width="16" height="12" viewBox="0 0 16 12"><rect x="0" y="0" width="16" height="12" fill="#a9a9a9"/><path d="M0 0 H16 L8 7 Z" fill="#cfcfcf"/><path d="M0.3 0.3 L8 7.2 L15.7 0.3" stroke="#fff" stroke-width="1.2" fill="none"/></svg>
<svg style="position:absolute;left:403px;top:422px" width="13" height="12" viewBox="0 0 13 12"><circle cx="6.5" cy="3" r="3.1" fill="#1e5fb3"/><path d="M0.2 11.6 L0.2 10.2 C0.2 8.2 1.8 7 4 7 L9 7 C11.2 7 12.8 8.2 12.8 10.2 L12.8 11.6 Z" fill="#1e5fb3"/></svg>
<div style="left:424.07px;top:422px;font-size:13.4px;line-height:13.4px;color:#111;white-space:nowrap;transform:scaleX(1.0577);transform-origin:0 0;">Peter Smith</div>
<svg style="position:absolute;left:659px;top:422px" width="16" height="12" viewBox="0 0 16 12"><rect x="0" y="0" width="16" height="12" fill="#a9a9a9"/><path d="M0 0 H16 L8 7 Z" fill="#cfcfcf"/><path d="M0.3 0.3 L8 7.2 L15.7 0.3" stroke="#fff" stroke-width="1.2" fill="none"/></svg>
<svg style="position:absolute;left:403px;top:454px" width="13" height="12" viewBox="0 0 13 12"><circle cx="6.5" cy="3" r="3.1" fill="#1e5fb3"/><path d="M0.2 11.6 L0.2 10.2 C0.2 8.2 1.8 7 4 7 L9 7 C11.2 7 12.8 8.2 12.8 10.2 L12.8 11.6 Z" fill="#1e5fb3"/></svg>
<div style="left:424.98px;top:454px;font-size:13.4px;line-height:13.4px;color:#111;white-space:nowrap;transform:scaleX(1.1179);transform-origin:0 0;">tester</div>
<svg style="position:absolute;left:659px;top:454px" width="16" height="12" viewBox="0 0 16 12"><rect x="0" y="0" width="16" height="12" fill="#a9a9a9"/><path d="M0 0 H16 L8 7 Z" fill="#cfcfcf"/><path d="M0.3 0.3 L8 7.2 L15.7 0.3" stroke="#fff" stroke-width="1.2" fill="none"/></svg>
<svg style="position:absolute;left:403px;top:486px" width="13" height="12" viewBox="0 0 13 12"><circle cx="6.5" cy="3" r="3.1" fill="#1e5fb3"/><path d="M0.2 11.6 L0.2 10.2 C0.2 8.2 1.8 7 4 7 L9 7 C11.2 7 12.8 8.2 12.8 10.2 L12.8 11.6 Z" fill="#1e5fb3"/></svg>
<div style="left:424.93px;top:486px;font-size:13.4px;line-height:13.4px;color:#111;white-space:nowrap;transform:scaleX(1.0261);transform-origin:0 0;">Thomas Wright</div>
<svg style="position:absolute;left:659px;top:486px" width="16" height="12" viewBox="0 0 16 12"><rect x="0" y="0" width="16" height="12" fill="#a9a9a9"/><path d="M0 0 H16 L8 7 Z" fill="#cfcfcf"/><path d="M0.3 0.3 L8 7.2 L15.7 0.3" stroke="#fff" stroke-width="1.2" fill="none"/></svg>
<div style="left:703px;top:500px;width:1px;height:30px;background:#ffffff;"></div>
<div style="left:706px;top:500px;width:1px;height:30px;background:#ffffff;"></div>
<div style="left:709px;top:294px;width:92px;height:37px;background:#b3c7de;"></div>
<div style="left:720.40px;top:307px;font-size:12px;line-height:12px;color:#333;white-space:nowrap;transform:scaleX(0.9900);transform-origin:0 0;">Assignments</div>
<div style="left:811px;top:294px;width:98px;height:37px;background:#b3c7de;"></div>
<div style="left:821.66px;top:307px;font-size:12px;line-height:12px;color:#333;white-space:nowrap;transform:scaleX(0.9935);transform-origin:0 0;">Share &amp; Invite</div>
<div style="left:919px;top:294px;width:121px;height:37px;background:#b3c7de;"></div>
<div style="left:928.97px;top:307px;font-size:12px;line-height:12px;color:#333;white-space:nowrap;transform:scaleX(0.9506);transform-origin:0 0;">Issue Proposals (0)</div>
<div style="left:708px;top:331px;width:817px;height:346px;background:#ffffff;"></div>
<div style="left:1048px;top:292px;width:99px;height:40px;box-sizing:border-box;border:3px solid #f8a928;background:#e4eaf4;box-shadow:3px 3px 4px rgba(40,50,70,0.35), inset 0 2px 3px rgba(0,0,0,0.18)"></div>
<div style="left:1060.77px;top:306px;font-size:12px;line-height:12px;color:#333;white-space:nowrap;transform:scaleX(0.9714);transform-origin:0 0;">Tester Details</div>
<svg style="position:absolute;left:730px;top:357px" width="35" height="31" viewBox="0 0 35 31"><circle cx="18.5" cy="9" r="8.6" fill="#1e5fb3"/><path d="M0 31 V26.5 C0 22.5 3 20.4 8 20.4 H27 C32 20.4 35 22.5 35 26.5 V31 Z" fill="#1e5fb3"/></svg>
<div style="left:804.17px;top:362px;font-size:21.5px;line-height:21.5px;color:#222;white-space:nowrap;transform:scaleX(0.9546);transform-origin:0 0;">Cindy McCarthy</div>
<div style="left:729.68px;top:416px;font-size:11.5px;line-height:11.5px;color:#333;white-space:nowrap;transform:scaleX(0.8862);transform-origin:0 0;">Email</div>
<div style="left:807px;top:411px;width:265px;height:22px;box-sizing:border-box;border:1px solid #a9a9a9;background:#fff"></div>
<div style="left:811.02px;top:416px;font-size:12.5px;line-height:12.5px;color:#222;white-space:nowrap;transform:scaleX(0.9660);transform-origin:0 0;">c.mccarthy@test.tricentis.com</div>
<div style="left:729.47px;top:452px;font-size:11.5px;line-height:11.5px;color:#333;white-space:nowrap;transform:scaleX(0.9961);transform-origin:0 0;">Information</div>
<div style="left:807px;top:445px;width:265px;height:118px;box-sizing:border-box;border:1px solid #a9a9a9;background:#fff"></div>
<div style="left:1054px;top:446px;width:17px;height:116px;background:#f0f0f0;"></div>
<svg style="position:absolute;left:1058px;top:452px" width="9" height="6" viewBox="0 0 9 6"><path d="M1 5 L4.5 1.5 L8 5" stroke="#c8c8c8" stroke-width="1.3" fill="none"/></svg>
<svg style="position:absolute;left:1058px;top:552px" width="9" height="6" viewBox="0 0 9 6"><path d="M1 1 L4.5 4.5 L8 1" stroke="#c8c8c8" stroke-width="1.3" fill="none"/></svg>
<div style="left:810.55px;top:448px;font-size:12.5px;line-height:12.5px;color:#222;white-space:nowrap;transform:scaleX(0.9508);transform-origin:0 0;">External manual tester invited for Interactive</div>
<div style="left:811.32px;top:463px;font-size:12.5px;line-height:12.5px;color:#222;white-space:nowrap;transform:scaleX(0.9411);transform-origin:0 0;">testing of Vehicle Services application.</div>
<div style="left:1011px;top:461px;width:1px;height:15px;background:#000;"></div>
<div style="left:975px;top:577px;width:97px;height:32px;background:#2196f3;"></div>
<div style="left:1010.82px;top:587px;font-size:12.5px;line-height:12.5px;color:#fff;white-space:nowrap;transform:scaleX(0.8584);transform-origin:0 0;">Save</div>
<div style="left:708px;top:677px;width:817px;height:2px;background:#c3d2e5;"></div>
<div style="left:710px;top:679px;width:815px;height:21px;background:#ffffff;"></div>
<div style="left:710px;top:690px;width:8px;height:1px;background:#d0d0d0;"></div>
<div style="left:816px;top:690px;width:707px;height:1px;background:#d0d0d0;"></div>
<div style="left:710px;top:690px;width:1px;height:10px;background:#d0d0d0;"></div>
<div style="left:1522px;top:690px;width:1px;height:10px;background:#d0d0d0;"></div>
<div style="left:1524px;top:677px;width:1px;height:23px;background:#c3d2e5;"></div>
<div style="left:721.49px;top:683px;font-size:12px;line-height:12px;color:#333;white-space:nowrap;transform:scaleX(0.9476);transform-origin:0 0;">Session Schedule</div>
<div style="left:0px;top:700px;width:1562px;height:1px;background:#9c9c9c;"></div>
<div style="left:1px;top:701px;width:1561px;height:12px;background:#a1b1c8;"></div>
</body></html>
